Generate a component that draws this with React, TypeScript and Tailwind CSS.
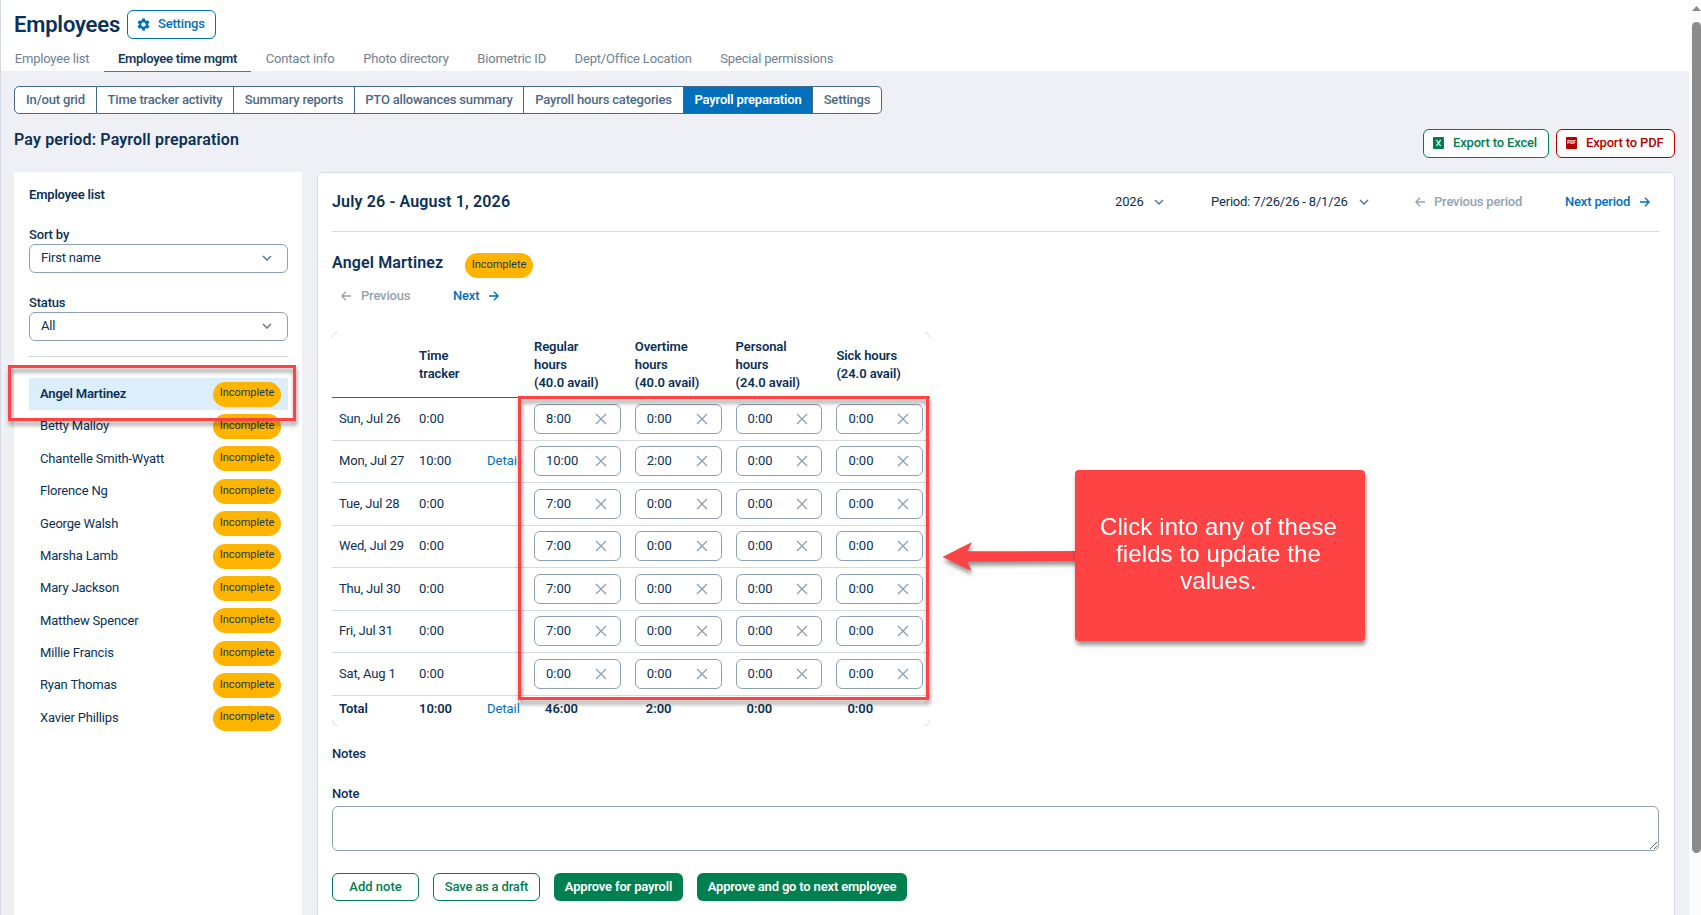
import React from "react";

const people = [
  "Angel Martinez",
  "Betty Malloy",
  "Chantelle Smith-Wyatt",
  "Florence Ng",
  "George Walsh",
  "Marsha Lamb",
  "Mary Jackson",
  "Matthew Spencer",
  "Millie Francis",
  "Ryan Thomas",
  "Xavier Phillips",
];

const days = [
  { day: "Sun, Jul 26", tracked: "0:00", detail: false, values: ["8:00", "0:00", "0:00", "0:00"] },
  { day: "Mon, Jul 27", tracked: "10:00", detail: true, values: ["10:00", "2:00", "0:00", "0:00"] },
  { day: "Tue, Jul 28", tracked: "0:00", detail: false, values: ["7:00", "0:00", "0:00", "0:00"] },
  { day: "Wed, Jul 29", tracked: "0:00", detail: false, values: ["7:00", "0:00", "0:00", "0:00"] },
  { day: "Thu, Jul 30", tracked: "0:00", detail: false, values: ["7:00", "0:00", "0:00", "0:00"] },
  { day: "Fri, Jul 31", tracked: "0:00", detail: false, values: ["7:00", "0:00", "0:00", "0:00"] },
  { day: "Sat, Aug 1", tracked: "0:00", detail: false, values: ["0:00", "0:00", "0:00", "0:00"] },
];

const tabs = [
  "Employee list",
  "Employee time mgmt",
  "Contact info",
  "Photo directory",
  "Biometric ID",
  "Dept/Office Location",
  "Special permissions",
];

const segments = [
  { label: "In/out grid", width: "w-[83px]" },
  { label: "Time tracker activity", width: "w-[137px]" },
  { label: "Summary reports", width: "w-[121px]" },
  { label: "PTO allowances summary", width: "w-[169px]" },
  { label: "Payroll hours categories", width: "w-[160px]" },
  { label: "Payroll preparation", width: "w-[129px]" },
  { label: "Settings", width: "w-[69px]" },
];

function Chevron() {
  return (
    <svg width="10" height="6" viewBox="0 0 10 6" fill="none" stroke="#5f788e" strokeWidth="1.5" className="shrink-0">
      <path d="M1 1l4 4 4-4" />
    </svg>
  );
}

function Arrow({ left = false }: { left?: boolean }) {
  return (
    <svg width="10" height="10" viewBox="0 0 10 10" fill="none" stroke="currentColor" strokeWidth="1.3" className="shrink-0">
      {left ? <path d="M10 5H1M5 .7L.9 5 5 9.3" /> : <path d="M0 5h9M5 .7L9.1 5 5 9.3" />}
    </svg>
  );
}

function Gear() {
  return (
    <svg width="15" height="15" viewBox="0 0 24 24" fill="#0070bd" className="shrink-0">
      <path d="M19.14 12.94c.04-.3.06-.61.06-.94s-.02-.64-.07-.94l2.03-1.58c.18-.14.23-.41.12-.61l-1.92-3.32c-.12-.22-.37-.29-.59-.22l-2.39.96c-.5-.38-1.03-.7-1.62-.94l-.36-2.54c-.04-.24-.24-.41-.48-.41h-3.84c-.24 0-.43.17-.47.41l-.36 2.54c-.59.24-1.13.57-1.62.94l-2.39-.96c-.22-.08-.47 0-.59.22L2.74 8.87c-.12.21-.08.47.12.61l2.03 1.58c-.05.3-.09.63-.09.94s.02.64.07.94l-2.03 1.58c-.18.14-.23.41-.12.61l1.92 3.32c.12.22.37.29.59.22l2.39-.96c.5.38 1.03.7 1.62.94l.36 2.54c.05.24.24.41.48.41h3.84c.24 0 .44-.17.47-.41l.36-2.54c.59-.24 1.13-.56 1.62-.94l2.39.96c.22.08.47 0 .59-.22l1.92-3.32c.12-.22.07-.47-.12-.61l-2.01-1.58zM12 15.6c-1.98 0-3.6-1.62-3.6-3.6s1.62-3.6 3.6-3.6 3.6 1.62 3.6 3.6-1.62 3.6-3.6 3.6z" />
    </svg>
  );
}

function Badge() {
  return (
    <span className="flex h-[25px] w-[68px] shrink-0 items-center justify-center rounded-full bg-[#ffb400] pb-px text-[11px] font-normal tracking-[-0.03px] text-[#17395c]">
      Incomplete
    </span>
  );
}

function Select({ label, value }: { label: string; value: string }) {
  return (
    <div className="flex flex-col">
      <span className="h-5 pt-px text-[13px] leading-5 font-medium">{label}</span>
      <div className="flex h-[29px] items-center justify-between rounded-[6px] border border-[#8ea0b4] pr-[15px] pb-px pl-[11px] text-[13px]">
        {value}
        <Chevron />
      </div>
    </div>
  );
}

function HoursField({ value }: { value: string }) {
  return (
    <div className="flex h-[30px] w-[86.8px] items-center justify-between rounded-[6px] border border-[#8ea0b4] bg-white pr-[13px] pl-[11px]">
      <span className="pb-px">{value}</span>
      <svg width="12" height="12" viewBox="0 0 12 12" stroke="#8ea0b4" strokeWidth="1.4">
        <path d="M1 1l10 10M11 1L1 11" />
      </svg>
    </div>
  );
}

function HeadCell({ lines }: { lines: string[] }) {
  return (
    <div className="w-[100.8px] shrink-0">
      {lines.map((l) => (
        <div key={l}>{l}</div>
      ))}
    </div>
  );
}

function Header() {
  return (
    <header className="h-[71px] shrink-0 bg-white">
      <div className="flex h-[46px] items-center gap-[7px] pt-[3px] pl-[13px]">
        <h1 className="w-[106px] text-[22px] font-semibold">Employees</h1>
        <button className="flex h-[29px] w-[89px] items-center gap-[7px] rounded-[6px] border border-[#0070bd] pb-px pl-[8px] text-[13px] font-medium text-[#0070bd]">
          <Gear />
          Settings
        </button>
      </div>
      <nav className="-ml-[0.6px] flex h-[26px] text-[13px] text-[#6f8294]">
        {tabs.map((t, i) => (
          <span
            key={t}
            className={
              i === 1
                ? "border-b border-[#1389d8] px-[14.3px] pt-[3px] font-semibold tracking-[-0.25px] text-[#17395c]"
                : "px-[14.3px] pt-[3px]"
            }
          >
            {t}
          </span>
        ))}
      </nav>
    </header>
  );
}

function Sidebar() {
  return (
    <aside className="flex h-[743px] w-[288px] shrink-0 flex-col bg-white pt-[13px] pr-[14px] pl-[15px]">
      <h2 className="h-5 text-[13px] leading-5 font-semibold">Employee list</h2>
      <div className="mt-[19px] flex flex-col gap-[19px]">
        <Select label="Sort by" value="First name" />
        <Select label="Status" value="All" />
      </div>
      <hr className="mt-[15px] border-[#d3dae3]" />
      <ul className="mt-[21px] text-[13px]">
        {people.map((p, i) => (
          <li
            key={p}
            className={
              i === 0
                ? "flex h-[32.4px] items-center justify-between bg-[#dceefb] pr-[7px] pl-[11px] font-semibold"
                : "flex h-[32.4px] items-center justify-between pr-[7px] pl-[11px]"
            }
          >
            <span className="pb-px">{p}</span>
            <Badge />
          </li>
        ))}
      </ul>
    </aside>
  );
}

function HoursTable() {
  return (
    <div className="relative mt-[25px] w-[598px] text-[13px]">
      <svg width="598" height="394" viewBox="0 0 598 394" fill="none" stroke="#d3dae3" className="absolute top-0 left-0">
        <path d="M.5 5.5a5 5 0 0 1 5-5M592.5.5a5 5 0 0 1 5 5M.5 388.5a5 5 0 0 0 5 5M592.5 393.5a5 5 0 0 0 5-5" />
      </svg>
      <div className="flex h-[66px] items-center border-b border-[#3c6080] pl-[87px] leading-[18px] font-semibold tracking-[-0.08px]">
        <div className="w-[115px] shrink-0">
          <div>Time</div>
          <div>tracker</div>
        </div>
        <HeadCell lines={["Regular", "hours", "(40.0 avail)"]} />
        <HeadCell lines={["Overtime", "hours", "(40.0 avail)"]} />
        <HeadCell lines={["Personal", "hours", "(24.0 avail)"]} />
        <HeadCell lines={["Sick hours", "(24.0 avail)"]} />
      </div>
      {days.map((d) => (
        <div key={d.day} className="flex h-[42.5px] items-center border-b border-[#d3dae3] pl-[7px] tracking-normal">
          <span className="w-[80px] shrink-0 pb-px tracking-[-0.17px]">{d.day}</span>
          <span className="w-[68px] shrink-0 pb-px">{d.tracked}</span>
          <span className="w-[47px] shrink-0 pb-px text-[#0070bd]">{d.detail ? "Detail" : ""}</span>
          <div className="flex gap-[14px]">
            {d.values.map((v, i) => (
              <HoursField key={i} value={v} />
            ))}
          </div>
        </div>
      ))}
      <div className="flex h-[29.3px] items-center pb-[3px] pl-[7px] font-semibold tracking-[-0.05px]">
        <span className="w-[80px]">Total</span>
        <span className="w-[68px]">10:00</span>
        <span className="w-[58px] font-normal text-[#0070bd]">Detail</span>
        <span className="w-[100.8px]">46:00</span>
        <span className="w-[100.8px]">2:00</span>
        <span className="w-[100.8px]">0:00</span>
        <span>0:00</span>
      </div>
      <div className="absolute top-[64px] left-[186px] h-[304px] w-[411px] border-[3px] border-[#fd4344] drop-shadow-[1px_4px_2px_rgba(0,0,0,0.42)]" />
    </div>
  );
}

function Main() {
  return (
    <main className="flex h-[760px] w-[1358px] shrink-0 flex-col rounded-[6px] border border-[#d3dae3] bg-white pr-[15px] pl-[14px]">
      <div className="flex h-[59px] shrink-0 items-center border-b border-[#d3dae3] text-[13px]">
        <h2 className="w-[783px] text-base font-semibold tracking-[0.15px]">July 26 - August 1, 2026</h2>
        <span className="w-[39px]">2026</span>
        <Chevron />
        <span className="ml-[47px] w-[148px]">Period: 7/26/26 - 8/1/26</span>
        <Chevron />
        <span className="ml-[46px] flex w-[150px] items-center gap-[9px] font-medium text-[#93a3b3]">
          <Arrow left />
          Previous period
        </span>
        <span className="flex items-center gap-[10px] font-medium text-[#0070bd]">
          Next period
          <Arrow />
        </span>
      </div>
      <div className="mt-[17px] flex h-[28px] items-center">
        <h3 className="w-[133px] text-base font-semibold tracking-[0.15px]">Angel Martinez</h3>
        <div className="pt-[5px]">
          <Badge />
        </div>
      </div>
      <div className="mt-[8px] flex h-[22px] items-center pl-[9px] text-[13px] font-medium">
        <span className="flex w-[112px] items-center gap-[10px] text-[#93a3b3]">
          <Arrow left />
          Previous
        </span>
        <span className="flex items-center gap-[10px] text-[#0070bd]">
          Next
          <Arrow />
        </span>
      </div>
      <HoursTable />
      <h3 className="mt-[19px] h-5 text-[13px] leading-5 font-medium">Notes</h3>
      <label className="mt-[20px] h-[22px] text-[13px] leading-5 font-medium">Note</label>
      <textarea className="block h-[45px] w-[1327px] shrink-0 rounded-[6px] border border-[#8ea0b4]" />
      <div className="mt-[22px] flex text-[13px] font-medium text-[#008050]">
        <button className="h-[28px] w-[87px] rounded-[6px] border border-[#008050] tracking-normal">Add note</button>
        <button className="ml-[14px] h-[28px] w-[107px] rounded-[6px] border border-[#008050]">Save as a draft</button>
        <button className="ml-[14px] h-[28px] w-[129px] rounded-[6px] bg-[#008050] font-semibold text-white">
          Approve for payroll
        </button>
        <button className="ml-[14px] h-[28px] w-[210px] rounded-[6px] bg-[#008050] font-semibold text-white">
          Approve and go to next employee
        </button>
      </div>
    </main>
  );
}

export default function App() {
  return (
    <div className="relative flex h-[915px] w-[1701px] overflow-hidden bg-[#eff0f5] font-[Roboto,sans-serif] tracking-[-0.18px] text-[#0b3157]">
      <div className="flex w-[1689px] shrink-0 flex-col border-l border-[#d3dae3]">
        <Header />
        <div className="mt-[15px] flex h-[28px] shrink-0 pl-[13px] text-[13px] font-medium text-[#4c6a86]">
          {segments.map((s, i) => (
            <span
              key={s.label}
              className={
                "flex items-center justify-center border-y border-r border-[#44698a] " +
                s.width +
                (i === 5 ? " bg-[#0070bd] font-semibold text-white" : " bg-white") +
                (i === 0 ? " rounded-l-[5px] border-l" : "") +
                (i === 6 ? " rounded-r-[5px]" : "")
              }
            >
              {s.label}
            </span>
          ))}
        </div>
        <div className="flex h-[58px] shrink-0 justify-between pr-[14px] pl-[13px]">
          <h2 className="pt-[14px] text-base font-semibold tracking-[0.15px]">Pay period: Payroll preparation</h2>
          <div className="flex gap-[7px] pt-[15px] text-[13px] font-medium">
            <button className="flex h-[29px] w-[126px] items-center gap-[9px] rounded-[6px] border border-[#008050] bg-white pb-px pl-[9px] text-[#008050]">
              <svg width="11" height="12" viewBox="0 0 11 12">
                <rect width="11" height="12" rx="1" fill="#008050" />
                <path d="M3.4 3l4.2 6M7.6 3L3.4 9" stroke="#fff" strokeWidth="1.3" />
              </svg>
              Export to Excel
            </button>
            <button className="flex h-[29px] w-[119px] items-center gap-[9px] rounded-[6px] border border-[#b80000] bg-white pb-px pl-[9px] text-[#b80000]">
              <span className="flex h-3 w-[11px] items-center justify-center rounded-[1px] bg-[#b80000] text-[4.5px] leading-none font-bold tracking-normal text-white">
                PDF
              </span>
              Export to PDF
            </button>
          </div>
        </div>
        <div className="flex gap-[15px] pl-[13px]">
          <Sidebar />
          <Main />
        </div>
      </div>
      <div className="flex w-3 shrink-0 flex-col items-end bg-[#fcfcfc] pt-[6px]">
        <svg width="9" height="5" viewBox="0 0 9 5" fill="#8b8b8b">
          <path d="M4.5 0L9 5H0z" />
        </svg>
        <div className="mt-[11px] h-[831px] w-[9px] rounded-full bg-[#8b8b8b]" />
      </div>
      <div className="absolute top-[365px] left-[8px] h-[56px] w-[288px] border-[3px] border-[#fd4344] drop-shadow-[1px_4px_2px_rgba(0,0,0,0.42)]" />
      <svg width="140" height="40" viewBox="0 0 140 40" className="absolute top-[537px] left-[940px] drop-shadow-[1px_4px_2px_rgba(0,0,0,0.42)]">
        <path d="M2.5 20L32 5l-4.5 9.3L138 14v10l-110.5.5L31.5 34z" fill="#fd4344" />
      </svg>
      <div className="absolute top-[470px] left-[1075px] flex h-[171px] w-[290px] items-center justify-center rounded-[4px] bg-[#fd4344] pr-[3px] pb-[5px] text-center font-['Liberation_Sans',sans-serif] text-[24px] leading-[27px] tracking-[0.1px] text-white drop-shadow-[1px_4px_2px_rgba(0,0,0,0.42)]">
        <p>
          Click into any of these
          <br />
          fields to update the
          <br />
          values.
        </p>
      </div>
    </div>
  );
}
